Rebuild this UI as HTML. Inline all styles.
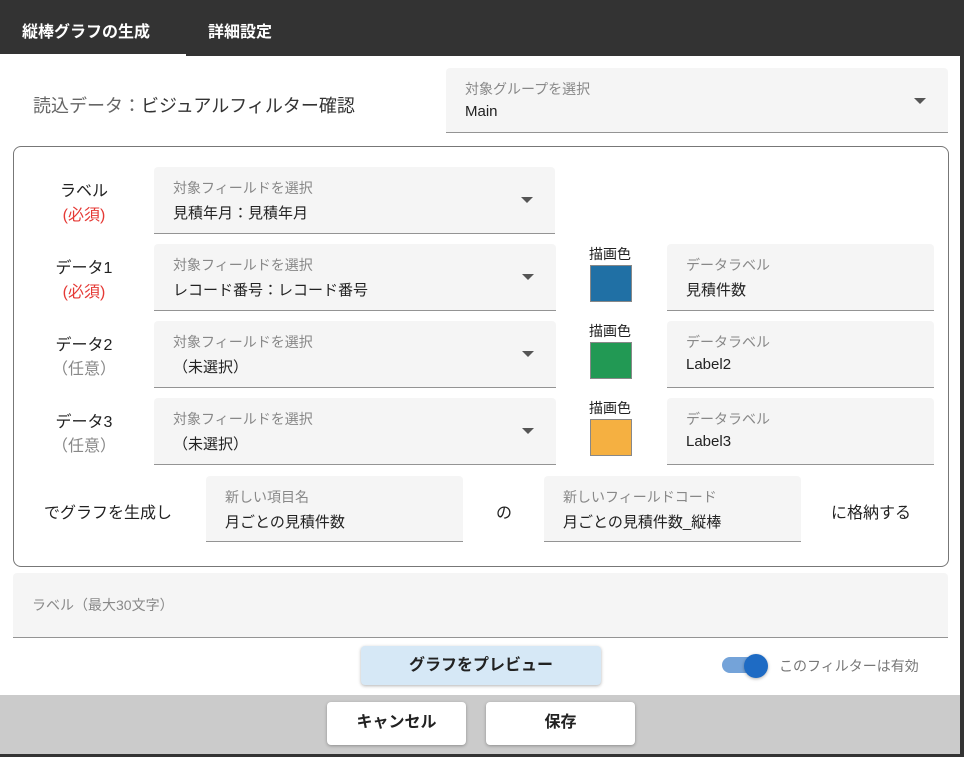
<!DOCTYPE html>
<html><head><meta charset="utf-8"><style>
*{box-sizing:border-box;margin:0;padding:0}
body{width:964px;height:757px;background:#fff;font-family:"Liberation Sans","Noto Sans CJK JP",sans-serif;position:relative;overflow:hidden;color:#222}
.a{position:absolute}
.hdr{left:0;top:0;width:964px;height:56px;background:#333}
.tab{color:#fff;font-size:16px;font-weight:bold;top:18px}
.f{position:absolute;background:#f5f5f5;border-radius:4px 4px 0 0;border-bottom:1px solid #949494}
.f .l{position:absolute;left:19px;top:11px;font-size:14px;color:#888}
.f .v{position:absolute;left:19px;top:35px;font-size:15px;color:#222}
.f .ar{position:absolute;right:22px;top:30px;width:0;height:0;border-left:6px solid transparent;border-right:6px solid transparent;border-top:6px solid #555}
.lab{position:absolute;text-align:center;font-size:16px;width:90px;line-height:24px}
.req{color:#e53935}.opt{color:#888}
.sw{position:absolute;left:590px;width:42px;height:37px;border:1px solid #888}
.cl{position:absolute;left:589px;font-size:14px}
.btn{position:absolute;background:#fff;border-radius:4px;box-shadow:0 1px 3px rgba(0,0,0,.3);font-size:16px;font-weight:bold;text-align:center;line-height:42px}
</style></head><body>
<div class="a hdr"></div>
<div class="a tab" style="left:22px">縦棒グラフの生成</div>
<div class="a tab" style="left:208px">詳細設定</div>
<div class="a" style="left:0;top:54px;width:186px;height:3px;background:#fff"></div>
<div class="a" style="left:33px;top:92px;font-size:18px;color:#333"><span style="color:#666">読込データ：</span>ビジュアルフィルター確認</div>
<div class="f" style="left:446px;top:68px;width:502px;height:65px"><div class="l">対象グループを選択</div><div class="v">Main</div><div class="ar"></div></div>
<div class="a" style="left:13px;top:146px;width:936px;height:421px;border:1px solid #777;border-radius:8px"></div>

<div class="lab" style="left:39px;top:180px">ラベル<br><span class="req">(必須)</span></div>
<div class="f" style="left:154px;top:167px;width:401px;height:67px"><div class="l">対象フィールドを選択</div><div class="v">見積年月：見積年月</div><div class="ar"></div></div>

<div class="lab" style="left:39px;top:257px">データ1<br><span class="req">(必須)</span></div>
<div class="f" style="left:154px;top:244px;width:402px;height:67px"><div class="l">対象フィールドを選択</div><div class="v">レコード番号：レコード番号</div><div class="ar"></div></div>
<div class="cl" style="top:244px">描画色</div><div class="sw" style="top:265px;background:#2070a5"></div>
<div class="f" style="left:667px;top:244px;width:267px;height:67px"><div class="l">データラベル</div><div class="v">見積件数</div></div>

<div class="lab" style="left:39px;top:334px">データ2<br><span class="opt">（任意）</span></div>
<div class="f" style="left:154px;top:321px;width:402px;height:67px"><div class="l">対象フィールドを選択</div><div class="v">（未選択）</div><div class="ar"></div></div>
<div class="cl" style="top:321px">描画色</div><div class="sw" style="top:342px;background:#229954"></div>
<div class="f" style="left:667px;top:321px;width:267px;height:67px"><div class="l">データラベル</div><div class="v">Label2</div></div>

<div class="lab" style="left:39px;top:411px">データ3<br><span class="opt">（任意）</span></div>
<div class="f" style="left:154px;top:398px;width:402px;height:67px"><div class="l">対象フィールドを選択</div><div class="v">（未選択）</div><div class="ar"></div></div>
<div class="cl" style="top:398px">描画色</div><div class="sw" style="top:419px;background:#f5b041"></div>
<div class="f" style="left:667px;top:398px;width:267px;height:67px"><div class="l">データラベル</div><div class="v">Label3</div></div>

<div class="a" style="left:44px;top:499px;font-size:16px">でグラフを生成し</div>
<div class="f" style="left:206px;top:476px;width:257px;height:66px"><div class="l">新しい項目名</div><div class="v">月ごとの見積件数</div></div>
<div class="a" style="left:496px;top:499px;font-size:16px">の</div>
<div class="f" style="left:544px;top:476px;width:257px;height:66px"><div class="l">新しいフィールドコード</div><div class="v">月ごとの見積件数_縦棒</div></div>
<div class="a" style="left:831px;top:499px;font-size:16px">に格納する</div>

<div class="f" style="left:13px;top:573px;width:935px;height:65px"><div class="l" style="top:22px;font-size:14px">ラベル（最大30文字）</div></div>

<div class="btn" style="left:361px;top:646px;width:240px;height:39px;line-height:39px;background:#d6e8f6">グラフをプレビュー</div>
<div class="a" style="left:722px;top:657px;width:36px;height:16px;border-radius:8px;background:#74a3d9"></div>
<div class="a" style="left:744px;top:654px;width:24px;height:24px;border-radius:50%;background:#1e6bc4;box-shadow:0 1px 3px rgba(0,0,0,.3)"></div>
<div class="a" style="left:779px;top:656px;font-size:14px;color:#777">このフィルターは有効</div>

<div class="a" style="left:0;top:695px;width:964px;height:62px;background:#cbcbcb"></div>
<div class="btn" style="left:327px;top:702px;width:139px;height:43px">キャンセル</div>
<div class="btn" style="left:486px;top:702px;width:149px;height:43px">保存</div>
<div class="a" style="left:960px;top:0;width:4px;height:757px;background:#333"></div>
<div class="a" style="left:0;top:754px;width:964px;height:3px;background:#333"></div>
</body></html>
